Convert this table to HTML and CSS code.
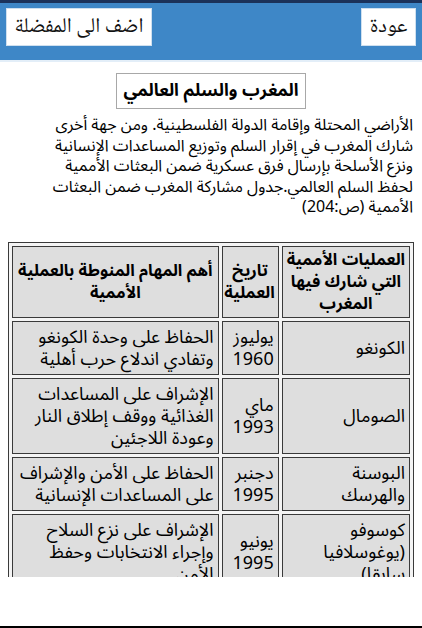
FILE: index.html
```html
<!DOCTYPE html>
<html lang="ar" dir="rtl">
<head>
<meta charset="utf-8">
<title>المغرب والسلم العالمي</title>
<link rel="stylesheet" href="styles.css">
</head>
<body>
<header class="topbar">
  <button class="btn btn-back">عودة</button>
  <button class="btn btn-fav">اضف الى المفضلة</button>
</header>
<main class="content">
  <div class="title-wrap"><h1 class="title">المغرب والسلم العالمي</h1></div>
  <p class="text">الأراضي المحتلة وإقامة الدولة الفلسطينية. ومن جهة أخرى<br>شارك المغرب في إقرار السلم وتوزيع المساعدات الإنسانية<br>ونزع الأسلحة بإرسال فرق عسكرية ضمن البعثات الأممية<br>لحفظ السلم العالمي.جدول مشاركة المغرب ضمن البعثات<br>الأممية (ص:204)</p>
  <table class="ops">
    <tr>
      <th class="c1">العمليات الأممية التي شارك فيها المغرب</th>
      <th class="c2">تاريخ العملية</th>
      <th class="c3">أهم المهام المنوطة بالعملية الأممية</th>
    </tr>
    <tr>
      <td>الكونغو</td>
      <td>يوليوز 1960</td>
      <td>الحفاظ على وحدة الكونغو وتفادي اندلاع حرب أهلية</td>
    </tr>
    <tr>
      <td>الصومال</td>
      <td>ماي 1993</td>
      <td>الإشراف على المساعدات الغذائية ووقف إطلاق النار وعودة اللاجئين</td>
    </tr>
    <tr>
      <td>البوسنة والهرسك</td>
      <td>دجنبر 1995</td>
      <td>الحفاظ على الأمن والإشراف على المساعدات الإنسانية</td>
    </tr>
    <tr>
      <td>كوسوفو (يوغوسلافيا سابقا)</td>
      <td>يونيو 1995</td>
      <td>الإشراف على نزع السلاح وإجراء الانتخابات وحفظ الأمن</td>
    </tr>
  </table>
</main>
<div class="bottom"></div>
</body>
</html>
```

FILE: styles.css
```css
html, body {
  margin: 0;
  padding: 0;
}
body {
  width: 422px;
  height: 628px;
  display: flex;
  flex-direction: column;
  background: #fff;
  color: #000;
  font-family: "Noto Sans Arabic", "Roboto", "DejaVu Sans Condensed", sans-serif;
  overflow: hidden;
}
.topbar {
  flex: none;
  height: 52px;
  border-top: 3px solid #1b325a;
  border-bottom: 2px solid #e3eef8;
  background: #3e87c7;
  display: flex;
  justify-content: space-between;
  align-items: flex-start;
  padding: 5px 6px 0 6px;
  box-sizing: content-box;
}
.btn {
  height: 38px;
  background: #fff;
  border: 1px solid #cfe0ef;
  font-family: "Noto Naskh Arabic", "DejaVu Sans Condensed", serif;
  font-size: 21px;
  color: #111;
  padding: 0 4px;
  margin: 0;
  white-space: nowrap;
}
.btn-back { width: 55px; }
.btn-fav { width: 146px; }
.content {
  flex: none;
  height: 515px;
  overflow: hidden;
}
.title-wrap {
  display: flex;
  justify-content: center;
  padding-top: 11px;
}
.title {
  margin: 0;
  height: 34px;
  padding: 0 7px;
  border: 1px solid #a8a8a8;
  font-size: 17.5px;
  font-weight: bold;
  line-height: 34px;
  white-space: nowrap;
}
.text {
  margin: 6px 0 0 0;
  padding: 0 9px;
  font-size: 16px;
  line-height: 20.5px;
  text-align: right;
  white-space: nowrap;
}
.ops {
  margin: 24px 8px 0 8px;
  width: 406px;
  border: 1px solid #3a3a3a;
  border-collapse: separate;
  border-spacing: 3px;
  background: #f4f4f4;
  table-layout: fixed;
}
.ops th, .ops td {
  border: 1px solid #3a3a3a;
  background: #dedede;
  font-size: 18px;
  line-height: 22px;
  padding: 4px;
  vertical-align: middle;
}
.ops th {
  font-size: 16.5px;
  font-weight: bold;
  text-align: center;
  padding: 2px 3px;
}
.ops td {
  text-align: right;
}
.c1 { width: 120px; }
.c2 { width: 49px; }
.c3 { width: 198px; }
.bottom {
  flex: 1;
  border-bottom: 2px solid #000;
}
```
